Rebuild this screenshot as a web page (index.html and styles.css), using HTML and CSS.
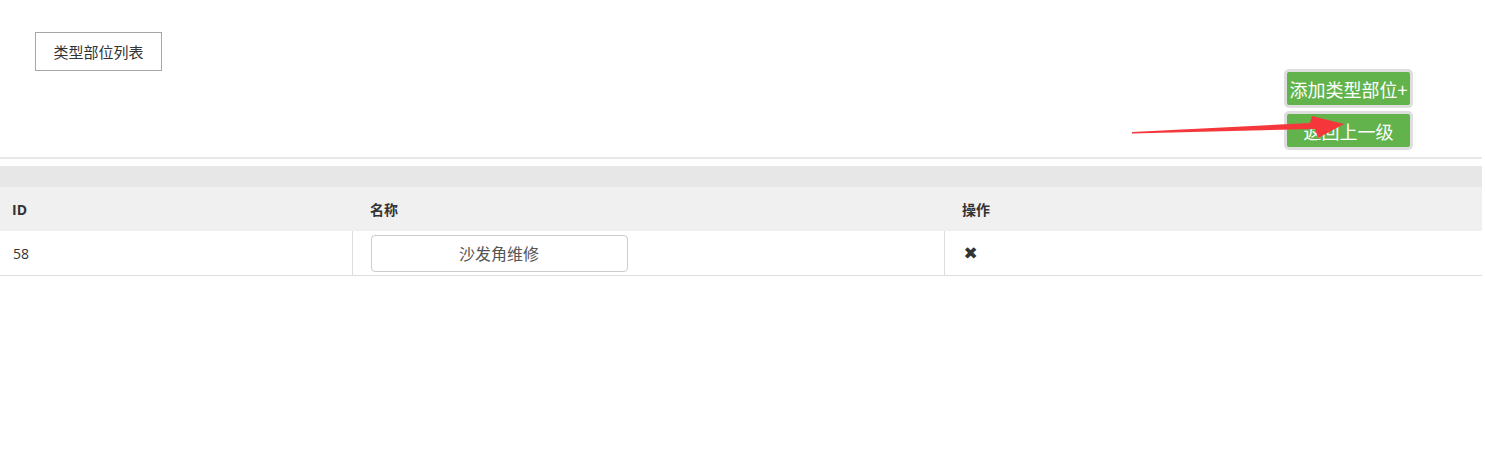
FILE: index.html
```html
<!DOCTYPE html>
<html lang="zh-CN">
<head>
<meta charset="utf-8">
<title>类型部位列表</title>
<link rel="stylesheet" href="styles.css">
</head>
<body>
<div class="page">
  <div class="top">
    <div class="tab">类型部位列表</div>
    <div class="actions">
      <a class="btn">添加类型部位+</a>
      <a class="btn">返回上一级</a>
    </div>
    <svg class="arrow" width="230" height="30" viewBox="0 0 230 30">
      <polygon fill="#f5373b" points="0,17 178,8 180,1 212,9 186,23 183,14 0,18.5"/>
    </svg>
  </div>
  <div class="bar"></div>
  <table class="grid">
    <colgroup>
      <col class="w1">
      <col class="w2">
      <col class="w3">
    </colgroup>
    <thead>
      <tr>
        <th class="c1">ID</th>
        <th class="c2">名称</th>
        <th class="c3">操作</th>
      </tr>
    </thead>
    <tbody>
      <tr>
        <td class="c1">58</td>
        <td class="c2"><input class="name" type="text" value="沙发角维修"></td>
        <td class="c3"><span class="del">✖</span></td>
      </tr>
    </tbody>
  </table>
</div>
</body>
</html>
```

FILE: styles.css
```css
html, body {
  margin: 0;
  padding: 0;
  background: #fff;
}
body {
  font-family: "Open Sans", "Noto Sans CJK SC", sans-serif;
  color: #333;
  font-size: 14px;
}
.page {
  width: 1482px;
}
.top {
  position: relative;
  display: flex;
  justify-content: space-between;
  align-items: flex-start;
  padding-top: 32px;
  padding-bottom: 7px;
  border-bottom: 2px solid #e8e8e8;
}
.tab {
  margin-left: 35px;
  width: 125px;
  height: 37px;
  border: 1px solid #a6a6a6;
  display: flex;
  align-items: center;
  justify-content: center;
  font-size: 15px;
  color: #333;
  font-family: "Noto Sans CJK SC", sans-serif;
}
.actions {
  margin-top: 37px;
  margin-right: 69px;
  display: flex;
  flex-direction: column;
  gap: 3px;
  width: 129px;
}
.btn {
  display: flex;
  align-items: center;
  justify-content: center;
  height: 33px;
  border: 3px solid #dedede;
  border-radius: 5px;
  background: #62b34c;
  color: #fff;
  font-family: "Noto Sans CJK SC", sans-serif;
  font-size: 18px;
  white-space: nowrap;
  box-sizing: content-box;
  cursor: pointer;
}
.arrow {
  position: absolute;
  left: 1132px;
  top: 115px;
}
.bar {
  margin-top: 7px;
  height: 21px;
  background: #e7e7e7;
}
.grid {
  width: 1482px;
  border-collapse: collapse;
  table-layout: fixed;
}
.w1 { width: 352px; }
.w2 { width: 592px; }
.w3 { width: 538px; }
.grid th {
  background: #f0f0f0;
  height: 44px;
  text-align: left;
  font-weight: 700;
  font-size: 14px;
  color: #333;
  padding: 0;
  font-family: "Open Sans", "Noto Sans CJK SC", sans-serif;
}
.grid td {
  height: 44px;
  padding: 0;
  border-bottom: 1px solid #ddd;
  vertical-align: middle;
}
.grid td + td {
  border-left: 1px solid #ddd;
}
.grid th.c1 { padding-left: 12px; }
.grid th.c2 { padding-left: 18px; }
.grid th.c3 { padding-left: 18px; }
.grid td.c1 { padding-left: 13px; font-size: 14px; color: #333; }
.grid td.c2 { padding-left: 18px; }
.grid td.c3 { padding-left: 19px; }
.name {
  display: block;
  width: 257px;
  height: 37px;
  box-sizing: border-box;
  border: 1px solid #ccc;
  border-radius: 4px;
  text-align: center;
  font-family: "Noto Sans CJK SC", sans-serif;
  font-size: 16px;
  color: #555;
  padding: 0;
  background: #fff;
}
.del {
  font-size: 17px;
  color: #333;
  font-family: "DejaVu Sans", sans-serif;
}
```
